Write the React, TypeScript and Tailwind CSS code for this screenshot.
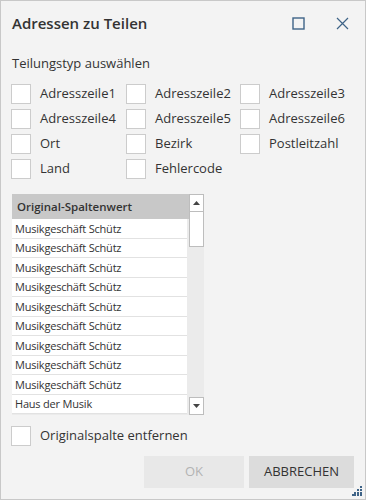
import { ReactNode } from 'react';

const OPTIONS = [
  'Adresszeile1', 'Adresszeile2', 'Adresszeile3',
  'Adresszeile4', 'Adresszeile5', 'Adresszeile6',
  'Ort', 'Bezirk', 'Postleitzahl',
  'Land', 'Fehlercode',
];

const ROWS = [
  ...Array(9).fill('Musikgeschäft Schütz'),
  'Haus der Musik',
];

function Check({ children }: { children: ReactNode }) {
  return (
    <label className="flex items-center gap-[9px] h-[20px]">
      <span className="w-[20px] h-[20px] border border-[#cccccc] bg-white shrink-0" />
      <span className="text-[13px] text-[#333]">{children}</span>
    </label>
  );
}

export default function App() {
  return (
    <div
      className="w-[366px] h-[500px] border border-[#c8c8c8] bg-[#f3f3f3] flex flex-col relative"
      style={{ fontFamily: '"Segoe UI", "Open Sans", sans-serif' }}
    >
      <div className="flex items-center h-[44px] pl-[11px] pr-[16px]">
        <h1 className="flex-1 text-[15px] text-[#333] font-semibold">Adressen zu Teilen</h1>
        <svg width="13" height="13" viewBox="0 0 13 13" className="mr-[31px]">
          <rect x="1" y="1" width="11" height="11" fill="none" stroke="#3e6387" strokeWidth="1.4" />
        </svg>
        <svg width="13" height="13" viewBox="0 0 13 13">
          <path d="M1 1L12 12M12 1L1 12" stroke="#3e6387" strokeWidth="1.2" />
        </svg>
      </div>

      <div className="pl-[11px] pt-[9px] text-[13px] text-[#333] leading-[18px]">Teilungstyp auswählen</div>

      <div className="grid grid-cols-[115px_114px_auto] gap-y-[5px] pl-[10px] mt-[12px]">
        {OPTIONS.map((o) => (
          <Check key={o}>{o}</Check>
        ))}
      </div>

      <div className="flex ml-[11px] mt-[15px] w-[192px] h-[221px]">
        <div className="w-[177px] flex flex-col bg-[#ebebeb]">
          <div className="h-[25px] bg-[#c8c8c8] flex items-center pl-[5px] text-[11.5px] font-semibold text-[#333]">
            Original-Spaltenwert
          </div>
          <div className="w-[175px] flex flex-col">
            {ROWS.map((r, i) => (
              <div
                key={i}
                className="h-[19.5px] bg-white border-b border-[#e2e2e2] flex items-center pl-[3px] text-[11px] tracking-[-0.2px] text-[#333] leading-none"
              >
                {r}
              </div>
            ))}
          </div>
        </div>
        <div className="w-[15px] flex flex-col bg-[#ebebeb]">
          <div className="h-[18px] bg-white border border-[#bdbdbd] flex items-center justify-center">
            <svg width="7" height="4" viewBox="0 0 7 4"><path d="M3.5 0L7 4H0Z" fill="#444" /></svg>
          </div>
          <div className="h-[35px] bg-white border-x border-b border-[#bdbdbd]" />
          <div className="flex-1" />
          <div className="h-[18px] bg-white border border-[#bdbdbd] flex items-center justify-center">
            <svg width="7" height="4" viewBox="0 0 7 4"><path d="M0 0H7L3.5 4Z" fill="#444" /></svg>
          </div>
        </div>
      </div>

      <div className="pl-[10px] mt-[11px]">
        <Check>Originalspalte entfernen</Check>
      </div>

      <div className="flex justify-end gap-[5px] pr-[11px] mt-[10px]">
        <button className="w-[100px] h-[32px] bg-[#e8e8e8] text-[13px] text-[#b3b3b3]">OK</button>
        <button className="w-[105px] h-[32px] bg-[#dcdcdc] text-[13px] text-[#333]">ABBRECHEN</button>
      </div>

      <svg width="10" height="10" viewBox="0 0 10 10" className="absolute right-[3px] bottom-[3px]">
        {[
          [8, 0], [8, 3], [5, 3], [8, 6], [5, 6], [2, 6], [8, 8], [5, 8], [2, 8], [0, 8],
        ].map(([x, y], i) => (
          <rect key={i} x={x} y={y} width="2" height="2" fill="#3e6387" />
        ))}
      </svg>
    </div>
  );
}
